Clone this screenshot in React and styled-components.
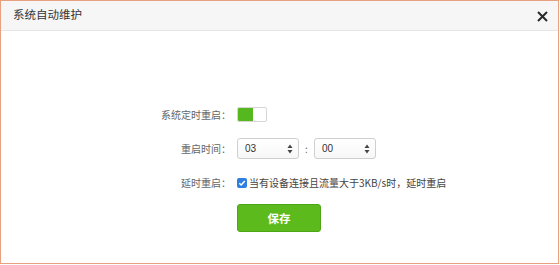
import React from 'react'
import styled, { createGlobalStyle } from 'styled-components'

const Global = createGlobalStyle`
  html, body {
    margin: 0;
    padding: 0;
    background: #fff;
  }
  body {
    font-family: "Noto Sans CJK SC", "Noto Sans", "Liberation Sans", sans-serif;
  }
`

const Frame = styled.div`
  width: 559px;
  height: 264px;
  box-sizing: border-box;
  border: 1px solid #e9a080;
  display: flex;
  flex-direction: column;
  background: #fff;
`

const Header = styled.div`
  height: 29px;
  flex: none;
  background: #f6f6f6;
  border-bottom: 1px solid #e6e6e6;
  display: flex;
  align-items: center;
  justify-content: space-between;
  padding: 0 10px 0 12px;
`

const Title = styled.div`
  font-size: 11.5px;
  color: #333;
  line-height: 1;
  margin-top: -1px;
`

const Close = styled.button`
  border: 0;
  background: none;
  padding: 0;
  width: 12px;
  height: 12px;
  display: flex;
  align-items: center;
  justify-content: center;
  cursor: pointer;
  margin-top: 2px;
`

const Form = styled.div`
  display: grid;
  grid-template-columns: 230px 1fr;
  column-gap: 6px;
  row-gap: 13px;
  padding-top: 73px;
  align-items: center;
`

const Label = styled.div`
  text-align: right;
  font-size: 10px;
  color: #666;
  line-height: 21px;
`

const Field = styled.div`
  display: flex;
  align-items: center;
  height: ${p => p.h || 21}px;
  margin-top: ${p => p.mt || 0}px;
`

const Toggle = styled.div`
  width: 30px;
  height: 15px;
  box-sizing: border-box;
  border: 1px solid #d6d6d6;
  border-radius: 2px;
  display: flex;
  overflow: hidden;
  background: #fff;
`

const ToggleOn = styled.div`
  width: 15px;
  background: #55b81f;
`

const Select = styled.div`
  width: 62px;
  height: 21px;
  box-sizing: border-box;
  border: 1px solid #cfcfcf;
  border-radius: 3px;
  background: linear-gradient(#ffffff, #f7f7f7);
  display: flex;
  align-items: center;
  justify-content: space-between;
  padding: 0 5px 0 7px;
  font-size: 10px;
  color: #333;
  font-family: "Liberation Sans", "Noto Sans CJK SC", sans-serif;
`

const Sep = styled.span`
  width: 15px;
  text-align: center;
  font-size: 10px;
  color: #666;
`

const CheckText = styled.span`
  font-size: 10px;
  color: #444;
  margin-left: 2px;
`

const SaveButton = styled.button`
  width: 84px;
  height: 28px;
  box-sizing: border-box;
  border: 1px solid #4ea516;
  border-radius: 3px;
  background: #5cba1d;
  color: #fff;
  font-family: inherit;
  font-size: 11.5px;
  font-weight: bold;
  cursor: pointer;
  padding: 0;
`

const Arrows = () => (
  <svg width="6" height="10" viewBox="0 0 6 10">
    <path d="M3 0.5 L5.5 4 L0.5 4 Z" fill="#444" />
    <path d="M3 9.5 L5.5 6 L0.5 6 Z" fill="#444" />
  </svg>
)

const Checkbox = () => (
  <svg width="10" height="10" viewBox="0 0 10 10">
    <rect x="0" y="0" width="10" height="10" rx="2" fill="#2f7fe0" />
    <path d="M2.3 5.2 L4.2 7 L7.8 3" stroke="#fff" strokeWidth="1.5" fill="none" />
  </svg>
)

export default function App() {
  return (
    <>
      <Global />
      <Frame>
        <Header>
          <Title>系统自动维护</Title>
          <Close aria-label="close">
            <svg width="11" height="11" viewBox="0 0 11 11">
              <path d="M1 1 L10 10 M10 1 L1 10" stroke="#2a2a2a" strokeWidth="2" />
            </svg>
          </Close>
        </Header>
        <Form>
          <Label>系统定时重启：</Label>
          <Field>
            <Toggle>
              <ToggleOn />
            </Toggle>
          </Field>

          <Label>重启时间：</Label>
          <Field>
            <Select>
              <span>03</span>
              <Arrows />
            </Select>
            <Sep>:</Sep>
            <Select>
              <span>00</span>
              <Arrows />
            </Select>
          </Field>

          <Label>延时重启：</Label>
          <Field>
            <Checkbox />
            <CheckText>当有设备连接且流量大于3KB/s时，延时重启</CheckText>
          </Field>

          <span />
          <Field h={28} mt={-2}>
            <SaveButton>保存</SaveButton>
          </Field>
        </Form>
      </Frame>
    </>
  )
}
